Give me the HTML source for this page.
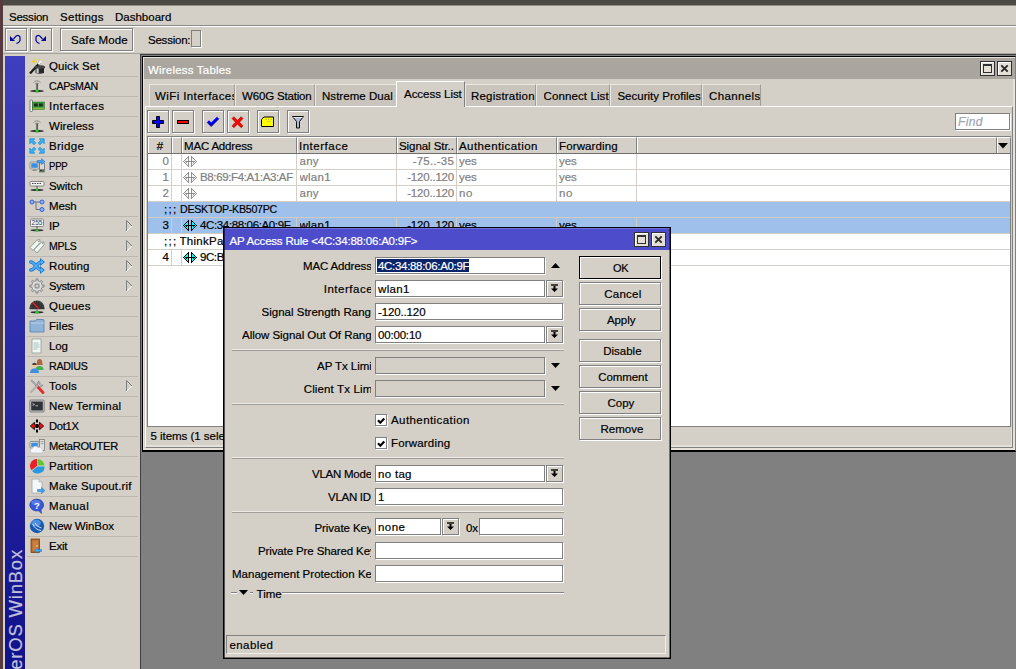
<!DOCTYPE html>
<html><head><meta charset="utf-8"><title>WinBox</title>
<style>
*{box-sizing:border-box;margin:0;padding:0}
html,body{width:1016px;height:669px;overflow:hidden}
body{position:relative;background:#d4d0c8;font-family:"Liberation Sans",sans-serif;font-size:11.5px;color:#000;line-height:14px;-webkit-text-stroke-width:.2px}
.a{position:absolute}
.t{position:absolute;white-space:pre;height:14px;line-height:14px}
.btn{position:absolute;background:#d4d0c8;border:1px solid;border-color:#fff #404040 #404040 #fff;box-shadow:inset -1px -1px 0 #808080}
.tb{position:absolute;width:22px;height:23px;background:#d4d0c8;border:1px solid #808080;box-shadow:1px 1px 0 #fff, inset 1px 1px 0 #fff}
.fld{position:absolute;height:17px;background:#fff;border:1px solid #808080;box-shadow:1px 1px 0 #fff}
.fld.dis{background:#d4d0c8}
.lbl{position:absolute;white-space:pre;overflow:hidden;height:16px;line-height:16px}
.sep{position:absolute;height:2px;border-top:1px solid #eceae4;border-bottom:1px solid #a09e98}
.cap{position:absolute;width:15px;height:15px;background:#e4e0d8;border:1px solid #303030;box-shadow:inset 1px 1px 0 #fff}
.mi{position:absolute;left:27px;width:111px;height:20px;border-bottom:1px solid #bcb8b0}
.mi svg{position:absolute;left:2px;top:1px}
.row{position:absolute;left:148px;width:862px;height:16px;background:#fff;border-bottom:1px solid #d4d0c8}
.row.sel{background:#9ec0ea;border-bottom-color:#d0ccc2}
.cell{position:absolute;top:0;height:15px;line-height:15px;white-space:pre;overflow:hidden}
.vl{position:absolute;top:0;width:1px;height:15px;background:#d4d0c8}
.g{color:#808080}
.hd{position:absolute;top:137px;height:16px;background:#d4d0c8;border-right:1px solid #808080;border-left:1px solid #fff;border-top:1px solid #fff;line-height:16px;white-space:pre;overflow:hidden;padding-left:1px}
.tab{position:absolute;top:84px;height:22px;background:#c9c5bd;border:1px solid;border-color:#ebe8e2 #a29e96 transparent #ebe8e2;border-bottom:none;overflow:hidden}
</style></head><body>

<div class="a" style="left:0;top:0;width:1016px;height:5px;background:#4b4943"></div><div class="a" style="left:3px;top:5px;width:1013px;height:1px;background:#8f8d86"></div>
<div class="a" style="left:0;top:0;width:3px;height:669px;background:#573a3e"></div>
<div class="t" style="left:9px;top:10px;letter-spacing:-0.232px;">Session</div>
<div class="t" style="left:60px;top:10px;letter-spacing:0.280px;">Settings</div>
<div class="t" style="left:115px;top:10px;letter-spacing:0.004px;">Dashboard</div>
<div class="a" style="left:3px;top:25px;width:1013px;height:1px;background:#8c8c8c"></div>
<div class="a" style="left:3px;top:26px;width:1013px;height:1px;background:#fff"></div>
<div class="a" style="left:3px;top:53px;width:1013px;height:1px;background:#a4a29c"></div>
<div class="tb" style="left:5px;top:28px"><svg class="a" style="left:0;top:1px" width="20" height="21" viewBox="0 0 20 21"><path d="M7.500 9 L10 6.200 L11 5.500 L12.700 5.500 L14 7 L14 10.500 L12.500 12.500 L10.500 13.500" fill="none" stroke="#00009c" stroke-width="1.200"/><path d="M4 6 V11 H9 Z" fill="#00009c"/></svg></div>
<div class="tb" style="left:30px;top:28px"><svg class="a" style="left:0;top:1px" width="20" height="21" viewBox="0 0 20 21"><path d="M11.500 9 L9 6.200 L8 5.500 L6.300 5.500 L5 7 L5 10.500 L6.500 12.500 L8.500 13.500" fill="none" stroke="#00009c" stroke-width="1.200"/><path d="M15 6 V11 H10 Z" fill="#00009c"/></svg></div>
<div class="tb" style="left:60px;top:28px;width:73px"></div>
<div class="t" style="left:71px;top:33px;letter-spacing:0.131px;">Safe Mode</div>
<div class="t" style="left:148px;top:33px;letter-spacing:-0.226px;">Session:</div>
<div class="fld dis" style="left:191px;top:30px;width:10px;height:17px"></div>
<div class="a" style="left:139px;top:54px;width:877px;height:615px;background:#808080;border-left:2px solid;border-top:1px solid #404040;border-left-color:#404040"></div>
<div class="a" style="left:139px;top:54px;width:1px;height:615px;background:#d4d0c8"></div>
<div class="a" style="left:5px;top:56px;width:20px;height:613px;background:linear-gradient(#3e3ebe 0%,#11118b 100%)"></div>
<div class="a" style="left:6px;top:549px;width:20px;height:0"><div style="position:absolute;left:0;top:0;transform-origin:0 0;transform:rotate(-90deg) translate(-100%,0);white-space:nowrap;font-size:18.500px;letter-spacing:.8px;line-height:20px;height:20px;color:#c0c2dc">RouterOS WinBox</div></div>
<div class="mi" style="top:57px"><svg width="16" height="16" viewBox="0 0 16 16"><path d="M1 15.500 L11 4.500" stroke="#181818" stroke-width="2.200"/><path d="M9.300 6.300 L12.300 3" stroke="#f4f4f4" stroke-width="2.200"/><path d="M6.500 9.500 h8.500 v5.500 q-4.200 1.600 -8.500 0z" fill="#282828"/><ellipse cx="10.700" cy="9.300" rx="5.300" ry="1.700" fill="#484848" stroke="#181818" stroke-width=".5"/><rect x="7.500" y="10.500" width="2.200" height="4.500" fill="#d0d0d0"/><path d="M5 .5 l.9 2 2 .9 -2 .9 -.9 2 -.9-2 -2-.9 2-.9z M10.500 0 l.5 1.100 1.100 .5 -1.100 .5 -.5 1.100 -.5-1.100 -1.100-.5 1.100-.5z" fill="#f0d020"/></svg></div>
<div class="t" style="left:49px;top:59px;letter-spacing:0.071px;">Quick Set</div>
<div class="mi" style="top:77px"><svg width="16" height="16" viewBox="0 0 16 16"><path d="M4.5 4.5 A4.5 4.5 0 0 1 11.5 4.5 M6 6 A2.8 2.8 0 0 1 10 6" fill="none" stroke="#909090" stroke-width="1"/><rect x="7.4" y="5.5" width="1.4" height="7" fill="#404040"/><ellipse cx="8" cy="13" rx="7" ry="1.2" fill="#303030"/><circle cx="8" cy="13" r="1.7" fill="#30c030"/></svg></div>
<div class="t" style="left:49px;top:79px;letter-spacing:-0.300px;transform:scaleX(0.9252);transform-origin:0 0;">CAPsMAN</div>
<div class="mi" style="top:97px"><svg width="16" height="16" viewBox="0 0 16 16"><rect x="1" y="2" width="2.500" height="11.500" rx=".8" fill="#f4f4f4" stroke="#686868" stroke-width=".8"/><rect x="3.500" y="4" width="12" height="7.500" fill="#38a038" stroke="#207020" stroke-width=".5"/><rect x="5" y="5.500" width="3.800" height="3" fill="#282828"/><rect x="10" y="5.500" width="3.800" height="3" fill="#282828"/><path d="M4.500 10.500 h10.500" stroke="#e8c840" stroke-width="1.400" stroke-dasharray="1 1"/></svg></div>
<div class="t" style="left:49px;top:99px;letter-spacing:0.490px;">Interfaces</div>
<div class="mi" style="top:117px"><svg width="16" height="16" viewBox="0 0 16 16"><path d="M4.5 4.5 A4.5 4.5 0 0 1 11.5 4.5 M6 6 A2.8 2.8 0 0 1 10 6" fill="none" stroke="#909090" stroke-width="1"/><rect x="7.4" y="5.5" width="1.4" height="7" fill="#404040"/><ellipse cx="8" cy="13" rx="7" ry="1.2" fill="#303030"/><circle cx="8" cy="13" r="1.7" fill="#30c030"/></svg></div>
<div class="t" style="left:49px;top:119px;letter-spacing:0.088px;">Wireless</div>
<div class="mi" style="top:137px"><svg width="16" height="16" viewBox="0 0 16 16"><g fill="#38b0f4" stroke="#1488d8" stroke-width=".7"><path d="M.8 .8 h5 l-1.600 1.600 2.600 2.600 -1.800 1.800 -2.600-2.600 L.8 5.800z"/><path d="M15.200 .8 v5 l-1.600-1.600 -2.600 2.600 -1.800-1.800 2.600-2.600 L10.200 .8z"/><path d="M.8 15.200 v-5 l1.600 1.600 2.600-2.600 1.800 1.800 -2.600 2.600 L5.800 15.200z"/><path d="M15.200 15.200 h-5 l1.600-1.600 -2.600-2.600 1.800-1.800 2.600 2.600 L15.200 10.200z"/></g></svg></div>
<div class="t" style="left:49px;top:139px;letter-spacing:0.308px;">Bridge</div>
<div class="mi" style="top:157px"><svg width="16" height="16" viewBox="0 0 16 16"><rect x="1" y="4" width="9" height="7" rx="1" fill="#e8e8e8" stroke="#707070" stroke-width=".7"/><rect x="2.2" y="5.2" width="6.6" height="4.6" fill="#3890e0"/><rect x="3.5" y="11.5" width="4" height="1.5" fill="#909090"/><rect x="10.5" y="5" width="5" height="9" fill="#d8d8d8" stroke="#606060" stroke-width=".7"/><rect x="11" y="11.5" width="4" height="2" fill="#303030"/><circle cx="14" cy="12.5" r=".7" fill="#30c030"/><path d="M8 2.5 h4.5 v-2 l3.5 3 -3.5 3 v-2 H8z" fill="#40a0f0" stroke="#2070c0" stroke-width=".5"/></svg></div>
<div class="t" style="left:49px;top:159px;letter-spacing:-0.300px;transform:scaleX(0.8320);transform-origin:0 0;">PPP</div>
<div class="mi" style="top:177px"><svg width="16" height="16" viewBox="0 0 16 16"><rect x="1" y="3.5" width="14" height="4.5" rx="1" fill="#f4f4f4" stroke="#707070" stroke-width=".8"/><path d="M3 5.5 h10" stroke="#404040" stroke-width="1.2" stroke-dasharray="1.5 1"/><rect x="7.5" y="8" width="1" height="4" fill="#505050"/><ellipse cx="8" cy="12" rx="6.5" ry="1" fill="#303030"/><circle cx="8" cy="12" r="1.4" fill="#30c030"/></svg></div>
<div class="t" style="left:49px;top:179px;letter-spacing:-0.062px;">Switch</div>
<div class="mi" style="top:197px"><svg width="16" height="16" viewBox="0 0 16 16"><path d="M3 4 h9 M7 4 v7.500 h5" fill="none" stroke="#707070" stroke-width="1"/><g fill="#90b0f8" stroke="#3060e0" stroke-width="1"><circle cx="3" cy="4" r="2"/><circle cx="13" cy="4" r="2"/><circle cx="13" cy="11.500" r="2"/></g></svg></div>
<div class="t" style="left:49px;top:199px;letter-spacing:-0.131px;">Mesh</div>
<div class="mi" style="top:217px"><svg width="16" height="16" viewBox="0 0 16 16"><rect x="1.5" y="1" width="13" height="7.5" rx="1" fill="#f4f4f4" stroke="#707070" stroke-width=".8"/><text x="8" y="7.2" font-size="6.5" text-anchor="middle" font-family="Liberation Sans" fill="#404040">255</text><rect x="7.5" y="8.5" width="1" height="4" fill="#505050"/><ellipse cx="8" cy="12.3" rx="6.5" ry="1" fill="#303030"/><circle cx="8" cy="12.3" r="1.4" fill="#30c030"/></svg><svg style="left:99px;top:3px" width="7" height="12" viewBox="0 0 7 12"><path d="M.5 .5 L6 6 L.5 11.500z" fill="#d4d0c8"/><path d="M.5 11.500 V.5 L6 6" fill="none" stroke="#808080" stroke-width="1"/><path d="M6 6 L.5 11.500" stroke="#fff" stroke-width="1"/></svg></div>
<div class="t" style="left:49px;top:219px;letter-spacing:-0.188px;">IP</div>
<div class="mi" style="top:237px"><svg width="16" height="16" viewBox="0 0 16 16"><g fill="#f0f6f2" stroke="#8c948c" stroke-width=".9"><path d="M.8 9.500 L8 2.200 l2.800-.7 .3 3 L4 12.500z"/><path d="M4.800 12 L12 4.500 l2.800-.7 .3 3 L8 15z"/></g><circle cx="9.600" cy="3.400" r=".6" fill="#8c948c"/><circle cx="13.600" cy="5.700" r=".6" fill="#8c948c"/></svg><svg style="left:99px;top:3px" width="7" height="12" viewBox="0 0 7 12"><path d="M.5 .5 L6 6 L.5 11.500z" fill="#d4d0c8"/><path d="M.5 11.500 V.5 L6 6" fill="none" stroke="#808080" stroke-width="1"/><path d="M6 6 L.5 11.500" stroke="#fff" stroke-width="1"/></svg></div>
<div class="t" style="left:49px;top:239px;letter-spacing:-0.300px;transform:scaleX(0.9161);transform-origin:0 0;">MPLS</div>
<div class="mi" style="top:257px"><svg width="16" height="16" viewBox="0 0 16 16"><g fill="none" stroke="#1878d0" stroke-width="3.400" stroke-linecap="round"><path d="M1.800 4 C6 4 8 12 12.500 12"/><path d="M1.800 12 C6 12 8 4 12.500 4"/></g><path d="M11 0 l5 4 -5 4z M11 8 l5 4 -5 4z" fill="#1878d0"/><g fill="none" stroke="#58b0f8" stroke-width="1.600" stroke-linecap="round"><path d="M1.800 4 C6 4 8 12 12.500 12"/><path d="M1.800 12 C6 12 8 4 12.500 4"/></g><path d="M12 1.800 l2.700 2.200 -2.700 2.200z M12 9.800 l2.700 2.200 -2.700 2.200z" fill="#58b0f8"/></svg><svg style="left:99px;top:3px" width="7" height="12" viewBox="0 0 7 12"><path d="M.5 .5 L6 6 L.5 11.500z" fill="#d4d0c8"/><path d="M.5 11.500 V.5 L6 6" fill="none" stroke="#808080" stroke-width="1"/><path d="M6 6 L.5 11.500" stroke="#fff" stroke-width="1"/></svg></div>
<div class="t" style="left:49px;top:259px;letter-spacing:0.137px;">Routing</div>
<div class="mi" style="top:277px"><svg width="16" height="16" viewBox="0 0 16 16"><path d="M13.07 6.87 L15.14 7.10 L15.14 8.90 L13.07 9.13 L12.39 10.79 L13.69 12.41 L12.41 13.69 L10.79 12.39 L9.13 13.07 L8.90 15.14 L7.10 15.14 L6.87 13.07 L5.21 12.39 L3.59 13.69 L2.31 12.41 L3.61 10.79 L2.93 9.13 L0.86 8.90 L0.86 7.10 L2.93 6.87 L3.61 5.21 L2.31 3.59 L3.59 2.31 L5.21 3.61 L6.87 2.93 L7.10 0.86 L8.90 0.86 L9.13 2.93 L10.79 3.61 L12.41 2.31 L13.69 3.59 L12.39 5.21z" fill="#c4c4c4" stroke="#787878" stroke-width=".8"/><circle cx="8" cy="8" r="4" fill="none" stroke="#e4e4e4" stroke-width="1.2"/><circle cx="8" cy="8" r="2" fill="#d4d0c8" stroke="#787878" stroke-width=".8"/></svg><svg style="left:99px;top:3px" width="7" height="12" viewBox="0 0 7 12"><path d="M.5 .5 L6 6 L.5 11.500z" fill="#d4d0c8"/><path d="M.5 11.500 V.5 L6 6" fill="none" stroke="#808080" stroke-width="1"/><path d="M6 6 L.5 11.500" stroke="#fff" stroke-width="1"/></svg></div>
<div class="t" style="left:49px;top:279px;letter-spacing:-0.300px;transform:scaleX(0.9742);transform-origin:0 0;">System</div>
<div class="mi" style="top:297px"><svg width="16" height="16" viewBox="0 0 16 16"><path d="M.5 10 A7.500 7.500 0 0 1 15.500 10 L15.500 11.300 H.5z" fill="#343434"/><path d="M2 9.500 A6 6 0 0 1 14 9.500" fill="none" stroke="#707070" stroke-width=".8" stroke-dasharray=".8 1.600"/><path d="M3.500 4.200 L9.500 10.500" stroke="#f02020" stroke-width="1.300"/><rect x="7.500" y="11.300" width="1" height="2.500" fill="#505050"/><ellipse cx="8" cy="14.300" rx="6.500" ry="1" fill="#282828"/><circle cx="8" cy="14.300" r="1.600" fill="#30d030"/></svg></div>
<div class="t" style="left:49px;top:299px;letter-spacing:0.220px;">Queues</div>
<div class="mi" style="top:317px"><svg width="16" height="16" viewBox="0 0 16 16"><path d="M1 3 h5 l1.500 -1.500 h6.500 q1 0 1 1 V14 H1z" fill="#90b4d8" stroke="#5080b0" stroke-width=".8"/><path d="M1.500 5 H15" stroke="#b8d0e8" stroke-width="1"/></svg></div>
<div class="t" style="left:49px;top:319px;letter-spacing:0.084px;">Files</div>
<div class="mi" style="top:337px"><svg width="16" height="16" viewBox="0 0 16 16"><path d="M3 1 h9 v14 h-9z" fill="#f0f8f4" stroke="#90a098" stroke-width=".8"/><path d="M4.500 5 h5 M4.500 7 h6 M4.500 9 h6 M4.500 11 h4" stroke="#a8c0c0" stroke-width="1"/></svg></div>
<div class="t" style="left:49px;top:339px;letter-spacing:-0.129px;">Log</div>
<div class="mi" style="top:357px"><svg width="16" height="16" viewBox="0 0 16 16"><circle cx="10.500" cy="4" r="2.500" fill="#f0c8a0"/><path d="M8 4 a2.600 3 0 0 1 5.200 0 l.5 3 h-6z" fill="#a05020" opacity=".8"/><path d="M6.500 12 q0-4 4-4 t4 4z" fill="#40b050"/><circle cx="5.500" cy="7.500" r="2.300" fill="#f0c8a0"/><path d="M3.200 7 a2.300 2.300 0 0 1 4.600 0z" fill="#504030"/><path d="M1 15 q0-4.500 4.500-4.500 t4.500 4.500z" fill="#4090e0"/></svg></div>
<div class="t" style="left:49px;top:359px;letter-spacing:-0.300px;transform:scaleX(0.9243);transform-origin:0 0;">RADIUS</div>
<div class="mi" style="top:377px"><svg width="16" height="16" viewBox="0 0 16 16"><path d="M2 2 L9 9" stroke="#a0a0a0" stroke-width="1.800"/><path d="M8 8 L14 14.500" stroke="#e03030" stroke-width="3" stroke-linecap="round"/><path d="M2 14 L11 5" stroke="#b0b0b0" stroke-width="2.200" stroke-linecap="round"/><path d="M10 3 a3 3 0 1 0 4 4 l-2.500 .3 -1.700 -1.700z" fill="#c8c8c8" stroke="#707070" stroke-width=".6"/></svg><svg style="left:99px;top:3px" width="7" height="12" viewBox="0 0 7 12"><path d="M.5 .5 L6 6 L.5 11.500z" fill="#d4d0c8"/><path d="M.5 11.500 V.5 L6 6" fill="none" stroke="#808080" stroke-width="1"/><path d="M6 6 L.5 11.500" stroke="#fff" stroke-width="1"/></svg></div>
<div class="t" style="left:49px;top:379px;letter-spacing:0.208px;">Tools</div>
<div class="mi" style="top:397px"><svg width="16" height="16" viewBox="0 0 16 16"><rect x=".8" y="2" width="14.400" height="12" rx="1" fill="#c8c8c8" stroke="#707070" stroke-width=".8"/><rect x="2.200" y="3.500" width="11.600" height="9" fill="#303438"/><path d="M3.500 5.500 l2 1 -2 1 M6.500 7.800 h2.500" stroke="#d0d0d0" stroke-width=".8" fill="none"/></svg></div>
<div class="t" style="left:49px;top:399px;letter-spacing:0.246px;">New Terminal</div>
<div class="mi" style="top:417px"><svg width="16" height="16" viewBox="0 0 16 16"><path d="M8 1.500 v3 M8 6 v4 M8 11.500 v3" stroke="#000" stroke-width="2"/><path d="M1.300 8 L5.500 4.300 v2.400 h1 v2.600 h-1 v2.400z M14.700 8 L10.500 4.300 v2.400 h-1 v2.600 h1 v2.400z" fill="#e81010" stroke="#000" stroke-width=".8"/></svg></div>
<div class="t" style="left:49px;top:419px;letter-spacing:-0.300px;transform:scaleX(0.9748);transform-origin:0 0;">Dot1X</div>
<div class="mi" style="top:437px"><svg width="16" height="16" viewBox="0 0 16 16"><rect x="1" y="3.500" width="9" height="6.500" rx="1" fill="#e8e8e8" stroke="#707070" stroke-width=".7"/><rect x="2.200" y="4.700" width="6.600" height="4.200" fill="#3890e0"/><rect x="10.500" y="1.500" width="5" height="11" fill="#e0e0e0" stroke="#707070" stroke-width=".7"/><path d="M11.500 3.500 h3 M11.500 5.500 h3" stroke="#909090" stroke-width=".8"/><path d="M3 15 a2.500 2.500 0 0 1 .5-4.800 a3 3 0 0 1 5.500-.5 a2.500 2.500 0 0 1 4 2 a1.800 1.800 0 0 1 0 3.300z" fill="#f4f6fa" stroke="#b0b8c8" stroke-width=".6"/></svg></div>
<div class="t" style="left:49px;top:439px;letter-spacing:-0.300px;transform:scaleX(0.9701);transform-origin:0 0;">MetaROUTER</div>
<div class="mi" style="top:457px"><svg width="16" height="16" viewBox="0 0 16 16"><path d="M8 8 L8 1 A7 7 0 0 0 2.500 12.300z" fill="#e82028"/><path d="M8.600 7.500 L8.600 1 A7 7 0 0 1 15.500 7.500z" fill="#60c838"/><path d="M8.400 8.600 L15.500 8.600 A7 6.500 0 0 1 3 13z" fill="#2898e0"/></svg></div>
<div class="t" style="left:49px;top:459px;letter-spacing:0.190px;">Partition</div>
<div class="mi" style="top:477px"><svg width="16" height="16" viewBox="0 0 16 16"><path d="M3 1 h7 l3 3 v11 h-10z" fill="#f4f8f8" stroke="#a0a8a8" stroke-width=".8"/><path d="M10 1 v3 h3" fill="#d8e0e0" stroke="#a0a8a8" stroke-width=".6"/><path d="M8.500 11.500 h4 v-2 l3.500 3 -3.500 3 v-2 h-4z" fill="#40a0f0" stroke="#2070c0" stroke-width=".5"/></svg></div>
<div class="t" style="left:49px;top:479px;letter-spacing:0.130px;">Make Supout.rif</div>
<div class="mi" style="top:497px"><svg width="16" height="16" viewBox="0 0 16 16"><path d="M8 1 a7 6 0 1 0 1.500 11.800 l3 2.700 -.5 -3.800 A7 6 0 0 0 8 1z" fill="#3858d8" stroke="#2038a0" stroke-width=".6"/><ellipse cx="7" cy="4.500" rx="4.500" ry="2.500" fill="#7090f0" opacity=".6"/><text x="8" y="11" font-size="9.500" font-weight="bold" text-anchor="middle" font-family="Liberation Sans" fill="#fff">?</text></svg></div>
<div class="t" style="left:49px;top:499px;letter-spacing:0.397px;">Manual</div>
<div class="mi" style="top:517px"><svg width="16" height="16" viewBox="0 0 16 16"><circle cx="8" cy="8" r="7.200" fill="#1858b0"/><ellipse cx="7" cy="5" rx="5" ry="3.500" fill="#60a0e8" opacity=".75"/><path d="M4 6 q1.500 5.500 8 6.500 M6 5 q1.500 4 6.500 5" stroke="#e8f0ff" stroke-width=".9" fill="none"/></svg></div>
<div class="t" style="left:49px;top:519px;letter-spacing:-0.093px;">New WinBox</div>
<div class="mi" style="top:537px"><svg width="16" height="16" viewBox="0 0 16 16"><rect x="2" y="1" width="8.500" height="13.500" fill="#b86828" stroke="#804010" stroke-width=".8"/><rect x="3.500" y="2.500" width="5.500" height="10.500" fill="#c88040"/><circle cx="8" cy="8" r=".8" fill="#f8e0a0"/><path d="M12.500 11.500 h-3.500 v-1.800 l-3.500 2.800 3.500 2.800 v-1.800 h3.500z" fill="#40a8f0" stroke="#2070c0" stroke-width=".5"/></svg></div>
<div class="t" style="left:49px;top:539px;letter-spacing:-0.218px;">Exit</div>
<div class="a" style="left:142px;top:56px;width:874px;height:396px;background:#d4d0c8;border:1px solid #000;border-bottom:2px solid;border-bottom-color:#000;border-right:1px solid #808080;box-shadow:inset 1px 1px 0 #e6e2da, inset -2px -2px 0 #e6e2da"></div>
<div class="a" style="left:144px;top:58px;width:871px;height:21px;background:#aaa69f"></div>
<div class="t" style="left:148px;top:63px;letter-spacing:0.198px;color:#fff;">Wireless Tables</div>
<div class="cap" style="left:980px;top:61px"><svg class="a" style="left:1px;top:1px" width="12" height="12" viewBox="0 0 12 12"><rect x="1.500" y="1.500" width="8" height="8" fill="none" stroke="#303030" stroke-width="1"/><rect x="1" y="1" width="9" height="2" fill="#303030"/></svg></div>
<div class="cap" style="left:997px;top:61px"><svg class="a" style="left:1px;top:1px" width="12" height="12" viewBox="0 0 12 12"><path d="M2.300 2.300 L8.700 8.700 M8.700 2.300 L2.300 8.700" stroke="#282828" stroke-width="1.900"/></svg></div>
<div class="tab" style="left:149px;width:86px"></div>
<div class="t" style="left:155px;top:89px;width:79px;overflow:hidden;letter-spacing:0.407px;">WiFi Interfaces</div>
<div class="tab" style="left:235px;width:80px"></div>
<div class="t" style="left:242px;top:89px;width:72px;overflow:hidden;letter-spacing:-0.170px;">W60G Station</div>
<div class="tab" style="left:315px;width:82px"></div>
<div class="t" style="left:322px;top:89px;width:74px;overflow:hidden;letter-spacing:0.041px;">Nstreme Dual</div>
<div class="tab" style="left:465px;width:71px"></div>
<div class="t" style="left:471px;top:89px;width:64px;overflow:hidden;letter-spacing:0.202px;">Registration</div>
<div class="tab" style="left:536px;width:74px"></div>
<div class="t" style="left:543.5px;top:89px;width:65.5px;overflow:hidden;letter-spacing:0.114px;">Connect List</div>
<div class="tab" style="left:610px;width:92px"></div>
<div class="t" style="left:617.4px;top:89px;width:83.60000000000002px;overflow:hidden;letter-spacing:0.018px;">Security Profiles</div>
<div class="tab" style="left:702px;width:59px"></div>
<div class="t" style="left:709px;top:89px;width:51px;overflow:hidden;letter-spacing:0.363px;">Channels</div>
<div class="a" style="left:145px;top:106px;width:868px;height:342px;background:#d4d0c8;border:1px solid;border-color:#fff #808080 #808080 #fff"></div>
<div class="a" style="left:396px;top:81px;width:69px;height:26px;background:#d4d0c8;border:1px solid;border-color:#fff #808080 transparent #fff;border-bottom:none"></div>
<div class="t" style="left:404px;top:87px;letter-spacing:-0.034px;">Access List</div>
<div class="tb" style="left:147px;top:110px;width:22px;height:23px"><svg class="a" style="left:-1px;top:-1px" width="22" height="23" viewBox="0 0 22 23"><path d="M9.500 6.500 h3 v4 h4 v3 h-4 v4 h-3 v-4 h-4 v-3 h4z" fill="#0000ff" stroke="#000" stroke-width="1"/></svg></div>
<div class="tb" style="left:172px;top:110px;width:22px;height:23px"><svg class="a" style="left:-1px;top:-1px" width="22" height="23" viewBox="0 0 22 23"><rect x="5.500" y="10.500" width="11" height="3" fill="#ff0000" stroke="#000" stroke-width="1"/></svg></div>
<div class="tb" style="left:202px;top:110px;width:22px;height:23px"><svg class="a" style="left:-1px;top:-1px" width="22" height="23" viewBox="0 0 22 23"><path d="M5 12.300 l2-2 2.200 2.200 L15 6.700 l2 2 -7.800 7.800z" fill="#0000ff"/><path d="M5 12.300 l4.200 4.200 L17 8.700" fill="none" stroke="#000040" stroke-width=".7"/></svg></div>
<div class="tb" style="left:227px;top:110px;width:22px;height:23px"><svg class="a" style="left:-1px;top:-1px" width="22" height="23" viewBox="0 0 22 23"><path d="M5 8.500 l1.800-1.800 3.700 3.500 3.700-3.500 1.800 1.800 -3.500 3.700 3.500 3.700 -1.800 1.800 -3.700-3.500 -3.700 3.500 -1.800-1.800 3.500-3.700z" fill="#ff0000" stroke="#800000" stroke-width=".5"/></svg></div>
<div class="tb" style="left:257px;top:110px;width:22px;height:23px"><svg class="a" style="left:-1px;top:-1px" width="22" height="23" viewBox="0 0 22 23"><path d="M4.500 9.500 l2.500-2.500 h9.500 v9.500 h-12z" fill="#ffff00" stroke="#000" stroke-width="1"/><path d="M8.500 9.500 h6.500 M10 11.500 h5" stroke="#c0c040" stroke-width=".9" stroke-dasharray="1.500 1"/></svg></div>
<div class="tb" style="left:287px;top:110px;width:22px;height:23px"><svg class="a" style="left:-1px;top:-1px" width="22" height="23" viewBox="0 0 22 23"><path d="M5.500 6.500 h11 l-4 5 v6.500 h-3 v-6.500z" fill="#b0b8dc" stroke="#101010" stroke-width="1"/><path d="M6.500 7.500 h9" stroke="#e8ecf8" stroke-width="1"/></svg></div>
<div class="fld" style="left:955px;top:113px;width:55px;height:17px"></div>
<div class="t" style="left:958px;top:115px;font-size:12px;letter-spacing:0.364px;font-style:italic;color:#a0a4b4;">Find</div>
<div class="a" style="left:147px;top:136px;width:864px;height:291px;background:#fff;border:1px solid #808080"></div>
<div class="a" style="left:148px;top:137px;width:862px;height:17px;background:#d4d0c8;border-bottom:1px solid #707070"></div>
<div class="hd" style="left:148px;width:24px;text-align:center;padding-left:0;">#</div>
<div class="hd" style="left:172px;width:10px;"></div>
<div class="hd" style="left:182px;width:115px;letter-spacing:-0.183px;">MAC Address</div>
<div class="hd" style="left:297px;width:100px;letter-spacing:0.506px;">Interface</div>
<div class="hd" style="left:397px;width:60px;letter-spacing:-0.069px;">Signal Str..</div>
<div class="hd" style="left:457px;width:100px;letter-spacing:0.422px;">Authentication</div>
<div class="hd" style="left:557px;width:80px;letter-spacing:0.127px;">Forwarding</div>
<div class="hd" style="left:637px;width:360px;"></div>
<div class="hd" style="left:997px;width:14px;"></div>
<svg class="a" style="left:998px;top:143px" width="10" height="6" viewBox="0 0 10 6"><path d="M0 0 h10 l-5 5.500z" fill="#000"/></svg>
<div class="row" style="top:154px"><div class="vl" style="left:23px;background:#d4d0c8"></div><div class="vl" style="left:33px;background:#d4d0c8"></div><div class="vl" style="left:148px;background:#d4d0c8"></div><div class="vl" style="left:248px;background:#d4d0c8"></div><div class="vl" style="left:308px;background:#d4d0c8"></div><div class="vl" style="left:408px;background:#d4d0c8"></div><div class="vl" style="left:488px;background:#d4d0c8"></div><div class="cell g" style="left:0px;width:21px;text-align:right;">0</div><svg class="a" style="left:35px;top:1px" width="15" height="14" viewBox="0 0 15 14" shape-rendering="crispEdges"><path d="M.5 6.500 L5.500 1.500 V11.500z M13.500 6.500 L8.500 1.500 V11.500z" fill="#f4f4f4" stroke="#909090" stroke-width="1"/><path d="M2 6.500 H12 M3.500 5.500 v2 M10.500 5.500 v2" fill="none" stroke="#909090" stroke-width="1"/></svg><div class="cell g" style="left:151.5px;width:97px;letter-spacing:0.251px;">any</div><div class="cell g" style="left:249px;width:57px;text-align:right;letter-spacing:0.207px;">-75..-35</div><div class="cell g" style="left:311px;width:97px;letter-spacing:-0.035px;">yes</div><div class="cell g" style="left:411px;width:77px;letter-spacing:-0.035px;">yes</div></div>
<div class="row" style="top:170px"><div class="vl" style="left:23px;background:#d4d0c8"></div><div class="vl" style="left:33px;background:#d4d0c8"></div><div class="vl" style="left:148px;background:#d4d0c8"></div><div class="vl" style="left:248px;background:#d4d0c8"></div><div class="vl" style="left:308px;background:#d4d0c8"></div><div class="vl" style="left:408px;background:#d4d0c8"></div><div class="vl" style="left:488px;background:#d4d0c8"></div><div class="cell g" style="left:0px;width:21px;text-align:right;">1</div><svg class="a" style="left:35px;top:1px" width="15" height="14" viewBox="0 0 15 14" shape-rendering="crispEdges"><path d="M.5 6.500 L5.500 1.500 V11.500z M13.500 6.500 L8.500 1.500 V11.500z" fill="#f4f4f4" stroke="#909090" stroke-width="1"/><path d="M2 6.500 H12 M3.500 5.500 v2 M10.500 5.500 v2" fill="none" stroke="#909090" stroke-width="1"/></svg><div class="cell g" style="left:52px;width:96px;letter-spacing:-0.370px;">B8:69:F4:A1:A3:AF</div><div class="cell g" style="left:151.5px;width:97px;letter-spacing:0.248px;">wlan1</div><div class="cell g" style="left:249px;width:57px;text-align:right;letter-spacing:-0.201px;">-120..120</div><div class="cell g" style="left:311px;width:97px;letter-spacing:-0.035px;">yes</div><div class="cell g" style="left:411px;width:77px;letter-spacing:-0.035px;">yes</div></div>
<div class="row" style="top:186px"><div class="vl" style="left:23px;background:#d4d0c8"></div><div class="vl" style="left:33px;background:#d4d0c8"></div><div class="vl" style="left:148px;background:#d4d0c8"></div><div class="vl" style="left:248px;background:#d4d0c8"></div><div class="vl" style="left:308px;background:#d4d0c8"></div><div class="vl" style="left:408px;background:#d4d0c8"></div><div class="vl" style="left:488px;background:#d4d0c8"></div><div class="cell g" style="left:0px;width:21px;text-align:right;">2</div><svg class="a" style="left:35px;top:1px" width="15" height="14" viewBox="0 0 15 14" shape-rendering="crispEdges"><path d="M.5 6.500 L5.500 1.500 V11.500z M13.500 6.500 L8.500 1.500 V11.500z" fill="#f4f4f4" stroke="#909090" stroke-width="1"/><path d="M2 6.500 H12 M3.500 5.500 v2 M10.500 5.500 v2" fill="none" stroke="#909090" stroke-width="1"/></svg><div class="cell g" style="left:151.5px;width:97px;letter-spacing:0.251px;">any</div><div class="cell g" style="left:249px;width:57px;text-align:right;letter-spacing:-0.201px;">-120..120</div><div class="cell g" style="left:311px;width:97px;letter-spacing:0.502px;">no</div><div class="cell g" style="left:411px;width:77px;letter-spacing:0.502px;">no</div></div>
<div class="row sel" style="top:202px"><div class="cell" style="left:16px;letter-spacing:1.300px">;;;</div><div class="cell" style="left:31.500px;letter-spacing:-0.300px;transform:scaleX(0.9274);transform-origin:0 0;">DESKTOP-KB507PC</div></div>
<div class="row sel" style="top:218px"><div class="vl" style="left:23px;background:#d0ccc2"></div><div class="vl" style="left:33px;background:#d0ccc2"></div><div class="vl" style="left:148px;background:#d0ccc2"></div><div class="vl" style="left:248px;background:#d0ccc2"></div><div class="vl" style="left:308px;background:#d0ccc2"></div><div class="vl" style="left:408px;background:#d0ccc2"></div><div class="vl" style="left:488px;background:#d0ccc2"></div><div class="cell" style="left:0px;width:21px;text-align:right;">3</div><svg class="a" style="left:35px;top:1px" width="15" height="14" viewBox="0 0 15 14" shape-rendering="crispEdges"><path d="M.5 6.500 L5.500 1.500 V11.500z M13.500 6.500 L8.500 1.500 V11.500z" fill="#00ffff" stroke="#000" stroke-width="1"/><path d="M2 6.500 H12 M3.500 5.500 v2 M10.500 5.500 v2" fill="none" stroke="#000" stroke-width="1"/></svg><div class="cell" style="left:52px;width:96px;letter-spacing:-0.362px;">4C:34:88:06:A0:9F</div><div class="cell" style="left:151.5px;width:97px;letter-spacing:0.248px;">wlan1</div><div class="cell" style="left:249px;width:57px;text-align:right;letter-spacing:-0.201px;">-120..120</div><div class="cell" style="left:311px;width:97px;letter-spacing:-0.035px;">yes</div><div class="cell" style="left:411px;width:77px;letter-spacing:-0.035px;">yes</div></div>
<div class="row" style="top:234px"><div class="cell" style="left:16px;letter-spacing:1.300px">;;;</div><div class="cell" style="left:31.500px;letter-spacing:0.276px;">ThinkPad</div></div>
<div class="row" style="top:250px"><div class="vl" style="left:23px;background:#d4d0c8"></div><div class="vl" style="left:33px;background:#d4d0c8"></div><div class="vl" style="left:148px;background:#d4d0c8"></div><div class="vl" style="left:248px;background:#d4d0c8"></div><div class="vl" style="left:308px;background:#d4d0c8"></div><div class="vl" style="left:408px;background:#d4d0c8"></div><div class="vl" style="left:488px;background:#d4d0c8"></div><div class="cell" style="left:0px;width:21px;text-align:right;">4</div><svg class="a" style="left:35px;top:1px" width="15" height="14" viewBox="0 0 15 14" shape-rendering="crispEdges"><path d="M.5 6.500 L5.500 1.500 V11.500z M13.500 6.500 L8.500 1.500 V11.500z" fill="#00ffff" stroke="#000" stroke-width="1"/><path d="M2 6.500 H12 M3.500 5.500 v2 M10.500 5.500 v2" fill="none" stroke="#000" stroke-width="1"/></svg><div class="cell" style="left:52px;width:96px;letter-spacing:-0.413px;">9C:B6:D0:00:00:00</div><div class="cell" style="left:151.5px;width:97px;letter-spacing:0.248px;">wlan1</div><div class="cell" style="left:249px;width:57px;text-align:right;letter-spacing:-0.201px;">-120..120</div><div class="cell" style="left:311px;width:97px;letter-spacing:-0.035px;">yes</div><div class="cell" style="left:411px;width:77px;letter-spacing:-0.035px;">yes</div></div>
<div class="t" style="left:150.5px;top:429px;letter-spacing:-0.032px;">5 items (1 sele</div>
<div class="a" style="left:147px;top:445px;width:865px;height:2px;background:#e6e2da"></div>
<div class="a" style="left:1011px;top:427px;width:1px;height:20px;background:#e6e2da"></div>
<div class="a" style="left:223px;top:227px;width:448px;height:432px;background:#d4d0c8;border:1px solid #000"></div>
<div class="a" style="left:224px;top:228px;width:1px;height:430px;background:rgba(0,0,0,.6);z-index:5"></div>
<div class="a" style="left:669px;top:228px;width:1px;height:430px;background:rgba(0,0,0,.45);z-index:5"></div>
<div class="a" style="left:224px;top:657px;width:446px;height:1px;background:rgba(0,0,0,.45);z-index:5"></div>
<div class="a" style="left:224px;top:228px;width:446px;height:22px;background:#4d4dcc;border-top:1px solid #7070dc"></div>
<div class="t" style="left:229.5px;top:234px;letter-spacing:-0.205px;color:#fff;">AP Access Rule &lt;4C:34:88:06:A0:9F&gt;</div>
<div class="cap" style="left:634px;top:232px"><svg class="a" style="left:1px;top:1px" width="12" height="12" viewBox="0 0 12 12"><rect x="1.500" y="1.500" width="8" height="8" fill="none" stroke="#303030" stroke-width="1"/><rect x="1" y="1" width="9" height="2" fill="#303030"/></svg></div>
<div class="cap" style="left:651px;top:232px"><svg class="a" style="left:1px;top:1px" width="12" height="12" viewBox="0 0 12 12"><path d="M2.300 2.300 L8.700 8.700 M8.700 2.300 L2.300 8.700" stroke="#282828" stroke-width="1.900"/></svg></div>
<div class="lbl" style="left:303px;width:67.80000000000001px;top:258px;letter-spacing:-0.138px;">MAC Address</div>
<div class="fld" style="left:375px;top:257px;width:170px"></div>
<div class="a" style="left:377px;top:259px;width:91.5px;height:13px;background:#0a246a"></div>
<div class="t" style="left:378px;top:259px;letter-spacing:-0.300px;transform:scaleX(0.9984);transform-origin:0 0;color:#fff;">4C:34:88:06:A0:9F</div>
<svg class="a" style="left:551px;top:263px" width="9" height="5" viewBox="0 0 9 5"><path d="M0 5 L4.500 0 L9 5z" fill="#000"/></svg>
<div class="lbl" style="left:323.75px;width:47.05000000000001px;top:281px;letter-spacing:0.506px;">Interface</div>
<div class="fld" style="left:375px;top:280px;width:170px"></div>
<div class="t" style="left:378px;top:282px;letter-spacing:0.348px;">wlan1</div>
<div class="a" style="left:546px;top:280px;width:17px;height:17px;background:#d4d0c8;border:1px solid #808080;box-shadow:1px 1px 0 #fff, inset 1px 1px 0 #fff"><svg class="a" style="left:3px;top:3px" width="9" height="10" viewBox="0 0 9 10"><path d="M1 1 h7" stroke="#000" stroke-width="1.400"/><path d="M3.500 2 h2 v2.500 h2.500 l-3.500 3.500 -3.500-3.500 h2.500z" fill="#000"/></svg></div>
<div class="lbl" style="left:261.5px;width:109.30000000000001px;top:304px;letter-spacing:0.007px;">Signal Strength Range</div>
<div class="fld" style="left:375px;top:303px;width:188px"></div>
<div class="t" style="left:378px;top:305px;letter-spacing:-0.134px;">-120..120</div>
<div class="lbl" style="left:242px;width:128.8px;top:327px;letter-spacing:-0.038px;">Allow Signal Out Of Range</div>
<div class="fld" style="left:375px;top:326px;width:170px"></div>
<div class="t" style="left:378px;top:328px;letter-spacing:-0.183px;">00:00:10</div>
<div class="a" style="left:546px;top:326px;width:17px;height:17px;background:#d4d0c8;border:1px solid #808080;box-shadow:1px 1px 0 #fff, inset 1px 1px 0 #fff"><svg class="a" style="left:3px;top:3px" width="9" height="10" viewBox="0 0 9 10"><path d="M1 1 h7" stroke="#000" stroke-width="1.400"/><path d="M3.500 2 h2 v2.500 h2.500 l-3.500 3.500 -3.500-3.500 h2.500z" fill="#000"/></svg></div>
<div class="sep" style="left:232px;top:349px;width:332px"></div>
<div class="lbl" style="left:317px;width:53.80000000000001px;top:358px;letter-spacing:-0.036px;">AP Tx Limit</div>
<div class="fld dis" style="left:375px;top:357px;width:170px"></div>
<svg class="a" style="left:551px;top:363px" width="9" height="5" viewBox="0 0 9 5"><path d="M0 0 h9 L4.500 5z" fill="#000"/></svg>
<div class="lbl" style="left:303.75px;width:67.05000000000001px;top:381px;letter-spacing:0.131px;">Client Tx Limit</div>
<div class="fld dis" style="left:375px;top:380px;width:170px"></div>
<svg class="a" style="left:551px;top:386px" width="9" height="5" viewBox="0 0 9 5"><path d="M0 0 h9 L4.500 5z" fill="#000"/></svg>
<div class="sep" style="left:232px;top:403px;width:332px"></div>
<div class="a" style="left:375px;top:414px;width:12px;height:12px;background:#fff;border:1px solid #808080;box-shadow:1px 1px 0 #fff"><svg class="a" style="left:0;top:1px" width="10" height="10" viewBox="0 0 10 10"><path d="M2 4.300 l2.300 2.400 L8.300 2.600" fill="none" stroke="#000" stroke-width="2.100"/></svg></div>
<div class="t" style="left:391px;top:413px;letter-spacing:0.422px;">Authentication</div>
<div class="a" style="left:375px;top:437px;width:12px;height:12px;background:#fff;border:1px solid #808080;box-shadow:1px 1px 0 #fff"><svg class="a" style="left:0;top:1px" width="10" height="10" viewBox="0 0 10 10"><path d="M2 4.300 l2.300 2.400 L8.300 2.600" fill="none" stroke="#000" stroke-width="2.100"/></svg></div>
<div class="t" style="left:391px;top:436px;letter-spacing:0.177px;">Forwarding</div>
<div class="sep" style="left:232px;top:457px;width:332px"></div>
<div class="lbl" style="left:312px;width:58.80000000000001px;top:466px;letter-spacing:-0.246px;">VLAN Mode</div>
<div class="fld" style="left:375px;top:465px;width:170px"></div>
<div class="t" style="left:378px;top:467px;letter-spacing:0.303px;">no tag</div>
<div class="a" style="left:546px;top:465px;width:17px;height:17px;background:#d4d0c8;border:1px solid #808080;box-shadow:1px 1px 0 #fff, inset 1px 1px 0 #fff"><svg class="a" style="left:3px;top:3px" width="9" height="10" viewBox="0 0 9 10"><path d="M1 1 h7" stroke="#000" stroke-width="1.400"/><path d="M3.500 2 h2 v2.500 h2.500 l-3.500 3.500 -3.500-3.500 h2.500z" fill="#000"/></svg></div>
<div class="lbl" style="left:328px;width:42.80000000000001px;top:489px;letter-spacing:-0.279px;">VLAN ID</div>
<div class="fld" style="left:375px;top:488px;width:188px"></div>
<div class="t" style="left:378px;top:490px;">1</div>
<div class="sep" style="left:232px;top:511px;width:332px"></div>
<div class="lbl" style="left:314.5px;width:56.30000000000001px;top:520px;letter-spacing:-0.065px;">Private Key</div>
<div class="fld" style="left:375px;top:518px;width:66px"></div>
<div class="t" style="left:378px;top:520px;letter-spacing:0.477px;">none</div>
<div class="a" style="left:442px;top:518px;width:17px;height:17px;background:#d4d0c8;border:1px solid #808080;box-shadow:1px 1px 0 #fff, inset 1px 1px 0 #fff"><svg class="a" style="left:3px;top:3px" width="9" height="10" viewBox="0 0 9 10"><path d="M1 1 h7" stroke="#000" stroke-width="1.400"/><path d="M3.500 2 h2 v2.500 h2.500 l-3.500 3.500 -3.500-3.500 h2.500z" fill="#000"/></svg></div>
<div class="t" style="left:466px;top:521px;letter-spacing:-0.178px;">0x</div>
<div class="fld" style="left:479px;top:518px;width:84px"></div>
<div class="lbl" style="left:258px;width:112.80000000000001px;top:543px;letter-spacing:-0.120px;">Private Pre Shared Key</div>
<div class="fld" style="left:375px;top:542px;width:188px"></div>
<div class="lbl" style="left:232px;width:138.8px;top:566px;letter-spacing:0.027px;">Management Protection Key</div>
<div class="fld" style="left:375px;top:565px;width:188px"></div>
<div class="a" style="left:231px;top:592px;width:6px;height:2px;border-top:1px solid #808080;border-bottom:1px solid #fff"></div>
<div class="a" style="left:250px;top:592px;width:3px;height:2px;border-top:1px solid #808080;border-bottom:1px solid #fff"></div>
<div class="a" style="left:282px;top:592px;width:282px;height:2px;border-top:1px solid #808080;border-bottom:1px solid #fff"></div>
<svg class="a" style="left:239px;top:590px" width="9" height="5" viewBox="0 0 9 5"><path d="M0 0 h9 L4.500 5z" fill="#000"/></svg>
<div class="t" style="left:256.5px;top:587px;letter-spacing:0.040px;">Time</div>
<div class="a" style="left:226px;top:635px;width:440px;height:19px;border:1px solid;border-color:#808080 #f0eee8 #f0eee8 #808080"></div>
<div class="t" style="left:229.5px;top:638px;letter-spacing:0.409px;">enabled</div>
<div class="tb" style="left:579px;top:256px;width:82px;height:23px;border-color:#000"></div>
<div class="t" style="left:613.25px;top:261px;letter-spacing:-0.300px;transform:scaleX(0.9548);transform-origin:0 0;">OK</div>
<div class="tb" style="left:579px;top:282px;width:82px;height:23px;border-color:#808080"></div>
<div class="t" style="left:604.25px;top:287px;letter-spacing:0.248px;">Cancel</div>
<div class="tb" style="left:579px;top:308px;width:82px;height:23px;border-color:#808080"></div>
<div class="t" style="left:607.0px;top:313px;letter-spacing:-0.096px;">Apply</div>
<div class="tb" style="left:579px;top:339px;width:82px;height:23px;border-color:#808080"></div>
<div class="t" style="left:603.25px;top:344px;letter-spacing:-0.008px;">Disable</div>
<div class="tb" style="left:579px;top:365px;width:82px;height:23px;border-color:#808080"></div>
<div class="t" style="left:598.25px;top:370px;letter-spacing:-0.080px;">Comment</div>
<div class="tb" style="left:579px;top:391px;width:82px;height:23px;border-color:#808080"></div>
<div class="t" style="left:607.5px;top:396px;letter-spacing:-0.015px;">Copy</div>
<div class="tb" style="left:579px;top:417px;width:82px;height:23px;border-color:#808080"></div>
<div class="t" style="left:600.5px;top:422px;letter-spacing:-0.005px;">Remove</div>
</body></html>
